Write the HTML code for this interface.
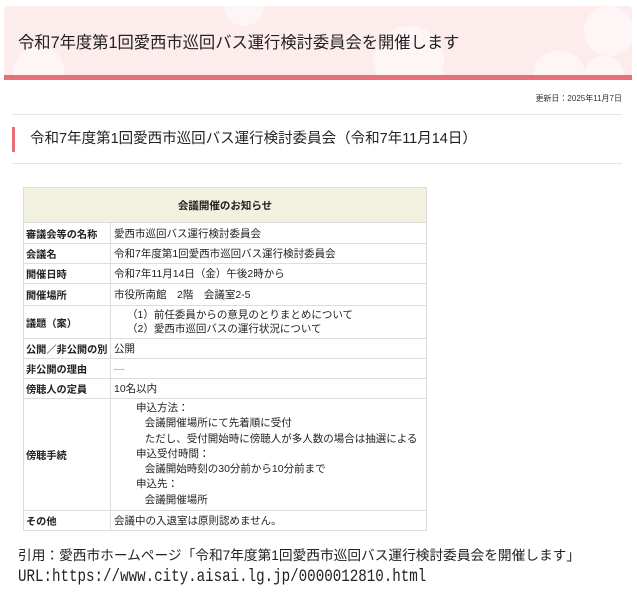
<!DOCTYPE html>
<html><head><meta charset="utf-8"><style>
*{margin:0;padding:0;box-sizing:border-box}
body{width:637px;height:600px;background:#fff;font-family:"Liberation Sans","Noto Sans CJK JP",sans-serif;color:#222;position:relative;overflow:hidden}
.hd{position:absolute;left:4px;top:6px;width:628px;height:74px;background:#fdecec;border-bottom:5px solid #e86f78;border-radius:4px 4px 0 0;overflow:hidden}
.hd .c{position:absolute;border-radius:50%;background:#fff;opacity:.5}
.hd h1{position:absolute;left:14px;top:23px;font-size:16.3px;font-weight:normal;color:#222;white-space:nowrap}
.upd{position:absolute;right:15px;top:93px;font-size:8px;color:#333}
.ln{position:absolute;left:12px;width:610px;height:1px;background:#e6e6e6}
.sub{position:absolute;left:12px;top:127px;height:25px;border-left:3px solid #e86f78;padding-left:15px;font-size:14.5px;line-height:25px;white-space:nowrap}
table{position:absolute;left:23px;top:187px;width:404px;border-collapse:collapse;font-size:10.5px;table-layout:fixed}
td,th{border:1px solid #ddd;padding:0 3px;vertical-align:middle;text-align:left}
th.top{background:#f2f0de;height:35px;text-align:center;font-weight:bold}
td.k{font-weight:bold;white-space:nowrap;background:#fff;font-size:10.2px;padding:0 2px;overflow:hidden}
.cite{position:absolute;left:18px;top:544px;font-size:13.7px;white-space:nowrap}
.url{position:absolute;left:18px;top:568px;font-family:"Liberation Mono",monospace;font-size:17.4px;white-space:nowrap;transform:scaleX(0.815);transform-origin:0 0}
</style></head><body>
<div class="hd">
<div class="c" style="left:220px;top:-20px;width:40px;height:40px"></div>
<div class="c" style="left:370px;top:20px;width:70px;height:70px"></div>
<div class="c" style="left:10px;top:40px;width:50px;height:50px"></div>
<div class="c" style="left:580px;top:0;width:50px;height:50px"></div>
<div class="c" style="left:530px;top:45px;width:50px;height:40px"></div>
<div class="c" style="left:580px;top:50px;width:40px;height:40px"></div>
<h1>令和7年度第1回愛西市巡回バス運行検討委員会を開催します</h1>
</div>
<div class="upd">更新日：2025年11月7日</div>
<div class="ln" style="top:114px"></div>
<div class="sub">令和7年度第1回愛西市巡回バス運行検討委員会（令和7年11月14日）</div>
<div class="ln" style="top:163px"></div>
<table>
<colgroup><col style="width:87px"><col></colgroup>
<tr><th class="top" colspan="2">会議開催のお知らせ</th></tr>
<tr style="height:21px"><td class="k">審議会等の名称</td><td>愛西市巡回バス運行検討委員会</td></tr>
<tr style="height:20px"><td class="k">会議名</td><td>令和7年度第1回愛西市巡回バス運行検討委員会</td></tr>
<tr style="height:20px"><td class="k">開催日時</td><td>令和7年11月14日（金）午後2時から</td></tr>
<tr style="height:22px"><td class="k">開催場所</td><td>市役所南館　2階　会議室2-5</td></tr>
<tr style="height:33px"><td class="k">議題（案）</td><td style="padding-left:16px;line-height:14px">（1）前任委員からの意見のとりまとめについて<br>（2）愛西市巡回バスの運行状況について</td></tr>
<tr style="height:20px"><td class="k">公開／非公開の別</td><td>公開</td></tr>
<tr style="height:20px"><td class="k">非公開の理由</td><td style="color:#999">―</td></tr>
<tr style="height:20px"><td class="k">傍聴人の定員</td><td>10名以内</td></tr>
<tr style="height:112px"><td class="k">傍聴手続</td><td style="padding-left:25px;line-height:15.2px">申込方法：<br>&nbsp;&nbsp;&nbsp;会議開催場所にて先着順に受付<br>&nbsp;&nbsp;&nbsp;ただし、受付開始時に傍聴人が多人数の場合は抽選による<br>申込受付時間：<br>&nbsp;&nbsp;&nbsp;会議開始時刻の30分前から10分前まで<br>申込先：<br>&nbsp;&nbsp;&nbsp;会議開催場所</td></tr>
<tr style="height:20px"><td class="k">その他</td><td>会議中の入退室は原則認めません。</td></tr>
</table>
<div class="cite">引用：愛西市ホームページ「令和7年度第1回愛西市巡回バス運行検討委員会を開催します」</div>
<div class="url">URL:https://www.city.aisai.lg.jp/0000012810.html</div>
</body></html>
